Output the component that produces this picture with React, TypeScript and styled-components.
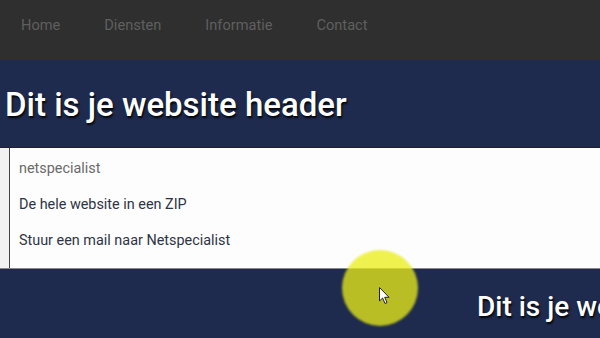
import React from 'react';
import styled, { createGlobalStyle } from 'styled-components';

const GlobalStyle = createGlobalStyle`
  html, body {
    margin: 0;
    padding: 0;
    background: #1e2b4e;
    font-family: Roboto, "Liberation Sans", sans-serif;
    overflow: hidden;
  }
`;

const Page = styled.div`
  position: relative;
  width: 600px;
  height: 338px;
  overflow: hidden;
`;

// Top navigation
const Nav = styled.nav`
  height: 60px;
  background: #2f2f2f;
  display: flex;
  align-items: flex-start;
  padding: 17px 0 0 21px;
  box-sizing: border-box;
  gap: 44px;
`;

const NavLink = styled.a`
  color: #5f5f5f;
  font-size: 14.6px;
  line-height: 16px;
  text-decoration: none;
`;

const HeaderBand = styled.header`
  height: 87px;
  background: #1e2b4e;
  display: flex;
  align-items: center;
  padding-left: 5px;
  padding-top: 2px;
  box-sizing: border-box;
`;

const Title = styled.h1<{ $size: number }>`
  margin: 0;
  color: #fff;
  font-size: ${({ $size }) => $size}px;
  font-weight: 500;
  white-space: nowrap;
  text-shadow: 1px 2px 2px rgba(0, 0, 0, 0.9);
`;

const Panel = styled.div`
  display: flex;
  height: 122px;
  background: #fdfdfd;
  border-top: 1px solid #222;
  border-bottom: 1px solid #888;
  box-sizing: border-box;
`;

const Gutter = styled.div`
  width: 9px;
  background: #f2f2f2;
  border-right: 1px solid #444;
`;

const List = styled.ul`
  list-style: none;
  margin: 0;
  padding: 13px 0 0 9px;
  display: flex;
  flex-direction: column;
  gap: 20px;
`;

const Item = styled.li<{ $muted?: boolean }>`
  font-size: 14.4px;
  line-height: 16px;
  color: ${({ $muted }) => ($muted ? '#6a6a6a' : '#2e3444')};
`;

const FooterBand = styled.div`
  height: 69px;
  background: #1e2b4e;
  display: flex;
  align-items: center;
  padding-left: 477px;
  padding-top: 6px;
  box-sizing: border-box;
  overflow: hidden;
`;

const Highlight = styled.div`
  position: absolute;
  left: 342px;
  top: 250px;
  width: 76px;
  height: 76px;
  border-radius: 50%;
  background: rgba(232, 236, 22, 0.76);
  filter: blur(1px);
  pointer-events: none;
`;

const Cursor = styled.svg`
  position: absolute;
  left: 379px;
  top: 287px;
`;

export default function App() {
  return (
    <Page>
      <GlobalStyle />
      <Nav>
        <NavLink>Home</NavLink>
        <NavLink>Diensten</NavLink>
        <NavLink>Informatie</NavLink>
        <NavLink>Contact</NavLink>
      </Nav>
      <HeaderBand>
        <Title $size={33}>Dit is je website header</Title>
      </HeaderBand>
      <Panel>
        <Gutter />
        <List>
          <Item $muted>netspecialist</Item>
          <Item>De hele website in een ZIP</Item>
          <Item>Stuur een mail naar Netspecialist</Item>
        </List>
      </Panel>
      <FooterBand>
        <Title $size={28}>Dit is je website header</Title>
      </FooterBand>
      <Highlight />
      <Cursor width="12" height="18" viewBox="0 0 12 18">
        <path d="M0.5 0.5 L0.5 14 L3.6 11 L6 16.5 L8 15.6 L5.7 10.3 L10 10.3 Z" fill="#fff" stroke="#222" strokeWidth="1" />
      </Cursor>
    </Page>
  );
}
